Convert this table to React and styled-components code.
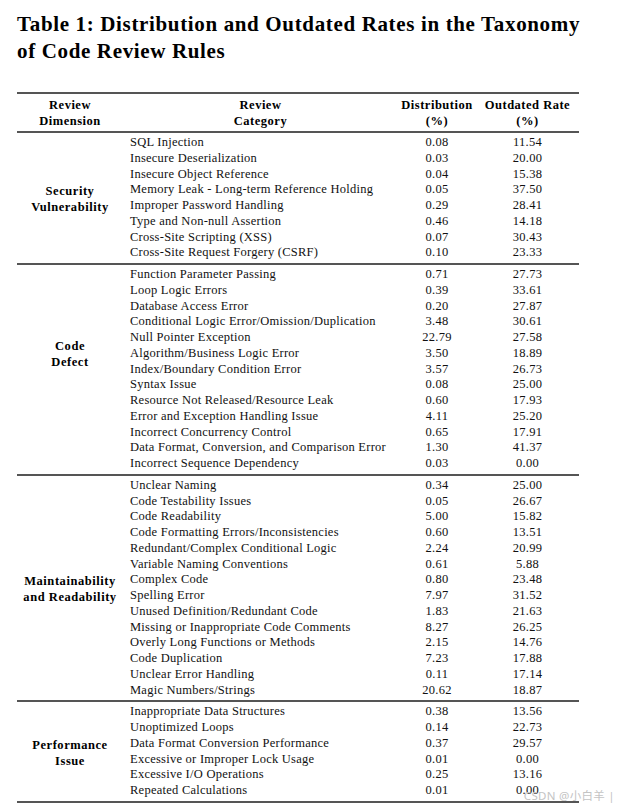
import React from "react";
import styled, { createGlobalStyle } from "styled-components";

const GlobalStyle = createGlobalStyle`
  html, body {
    margin: 0;
    padding: 0;
    background: #ffffff;
  }
  body {
    font-family: "Liberation Serif", "DejaVu Serif", serif;
    color: #111;
  }
`;

const Page = styled.div`
  position: relative;
  width: 623px;
  height: 810px;
  padding: 11px 0 0 17px;
  box-sizing: border-box;
  overflow: hidden;
`;

const Caption = styled.h1`
  margin: 0;
  font-size: 21px;
  line-height: 27px;
  font-weight: 700;
  letter-spacing: 0.65px;
  white-space: nowrap;
  color: #000;
`;

const Table = styled.table`
  margin-top: 27px;
  width: 562px;
  table-layout: fixed;
  border-collapse: collapse;
  font-size: 12.5px;
  letter-spacing: 0.25px;
  border-top: 2px solid #555;
  border-bottom: 2px solid #555;
`;

const HeadCell = styled.th`
  font-weight: 700;
  line-height: 16px;
  letter-spacing: 0.5px;
  padding: 3px 0 2px;
  text-align: center;
  vertical-align: top;
  white-space: nowrap;
  color: #000;
  border-bottom: 2px solid #555;
`;

const Section = styled.tbody`
  & + & tr:first-child td {
    border-top: 2px solid #555;
  }
  tr:first-child td {
    padding-top: 2px;
  }
  tr:last-child td {
    padding-bottom: 2px;
  }
`;

const Cell = styled.td`
  line-height: 15.75px;
  padding: 0;
  white-space: nowrap;
  text-align: ${(p) => p.$align || "center"};
  padding-left: ${(p) => (p.$align === "left" ? "7px" : "0")};
`;

const DimensionCell = styled.td`
  font-weight: 700;
  line-height: 16px;
  letter-spacing: 0.55px;
  text-align: center;
  vertical-align: middle;
  padding: 0;
  color: #000;
  white-space: nowrap;
`;

const Watermark = styled.div`
  position: absolute;
  right: 8px;
  bottom: 7px;
  font-family: "Noto Sans", "Noto Sans CJK SC", sans-serif;
  font-size: 11.5px;
  color: #c4c4c4;
  letter-spacing: 0.3px;
`;

const sections = [
  {
    label: ["Security", "Vulnerability"],
    rows: [
      ["SQL Injection", "0.08", "11.54"],
      ["Insecure Deserialization", "0.03", "20.00"],
      ["Insecure Object Reference", "0.04", "15.38"],
      ["Memory Leak - Long-term Reference Holding", "0.05", "37.50"],
      ["Improper Password Handling", "0.29", "28.41"],
      ["Type and Non-null Assertion", "0.46", "14.18"],
      ["Cross-Site Scripting (XSS)", "0.07", "30.43"],
      ["Cross-Site Request Forgery (CSRF)", "0.10", "23.33"],
    ],
  },
  {
    label: ["Code", "Defect"],
    span: 11,
    rows: [
      ["Function Parameter Passing", "0.71", "27.73"],
      ["Loop Logic Errors", "0.39", "33.61"],
      ["Database Access Error", "0.20", "27.87"],
      ["Conditional Logic Error/Omission/Duplication", "3.48", "30.61"],
      ["Null Pointer Exception", "22.79", "27.58"],
      ["Algorithm/Business Logic Error", "3.50", "18.89"],
      ["Index/Boundary Condition Error", "3.57", "26.73"],
      ["Syntax Issue", "0.08", "25.00"],
      ["Resource Not Released/Resource Leak", "0.60", "17.93"],
      ["Error and Exception Handling Issue", "4.11", "25.20"],
      ["Incorrect Concurrency Control", "0.65", "17.91"],
      ["Data Format, Conversion, and Comparison Error", "1.30", "41.37"],
      ["Incorrect Sequence Dependency", "0.03", "0.00"],
    ],
  },
  {
    label: ["Maintainability", "and Readability"],
    rows: [
      ["Unclear Naming", "0.34", "25.00"],
      ["Code Testability Issues", "0.05", "26.67"],
      ["Code Readability", "5.00", "15.82"],
      ["Code Formatting Errors/Inconsistencies", "0.60", "13.51"],
      ["Redundant/Complex Conditional Logic", "2.24", "20.99"],
      ["Variable Naming Conventions", "0.61", "5.88"],
      ["Complex Code", "0.80", "23.48"],
      ["Spelling Error", "7.97", "31.52"],
      ["Unused Definition/Redundant Code", "1.83", "21.63"],
      ["Missing or Inappropriate Code Comments", "8.27", "26.25"],
      ["Overly Long Functions or Methods", "2.15", "14.76"],
      ["Code Duplication", "7.23", "17.88"],
      ["Unclear Error Handling", "0.11", "17.14"],
      ["Magic Numbers/Strings", "20.62", "18.87"],
    ],
  },
  {
    label: ["Performance", "Issue"],
    rows: [
      ["Inappropriate Data Structures", "0.38", "13.56"],
      ["Unoptimized Loops", "0.14", "22.73"],
      ["Data Format Conversion Performance", "0.37", "29.57"],
      ["Excessive or Improper Lock Usage", "0.01", "0.00"],
      ["Excessive I/O Operations", "0.25", "13.16"],
      ["Repeated Calculations", "0.01", "0.00"],
    ],
  },
];

const App = () => {
  return (
    <>
      <GlobalStyle />
      <Page>
        <Caption>
          Table 1: Distribution and Outdated Rates in the Taxonomy
          <br />
          of Code Review Rules
        </Caption>
        <Table>
          <colgroup>
            <col style={{ width: 106 }} />
            <col style={{ width: 275 }} />
            <col style={{ width: 78 }} />
            <col style={{ width: 103 }} />
          </colgroup>
          <thead>
            <tr>
              <HeadCell>
                Review
                <br />
                Dimension
              </HeadCell>
              <HeadCell>
                Review
                <br />
                Category
              </HeadCell>
              <HeadCell>
                Distribution
                <br />
                (%)
              </HeadCell>
              <HeadCell>
                Outdated Rate
                <br />
                (%)
              </HeadCell>
            </tr>
          </thead>
          {sections.map((section) => {
            const span = section.span || section.rows.length;
            return (
              <Section key={section.label.join(" ")}>
                {section.rows.map(([name, dist, rate], i) => (
                  <tr key={name}>
                    {i === 0 && (
                      <DimensionCell rowSpan={span}>
                        {section.label[0]}
                        <br />
                        {section.label[1]}
                      </DimensionCell>
                    )}
                    {i >= span && <Cell />}
                    <Cell $align="left">{name}</Cell>
                    <Cell>{dist}</Cell>
                    <Cell>{rate}</Cell>
                  </tr>
                ))}
              </Section>
            );
          })}
        </Table>
        <Watermark>CSDN @小白羊 |</Watermark>
      </Page>
    </>
  );
};

export default App;
